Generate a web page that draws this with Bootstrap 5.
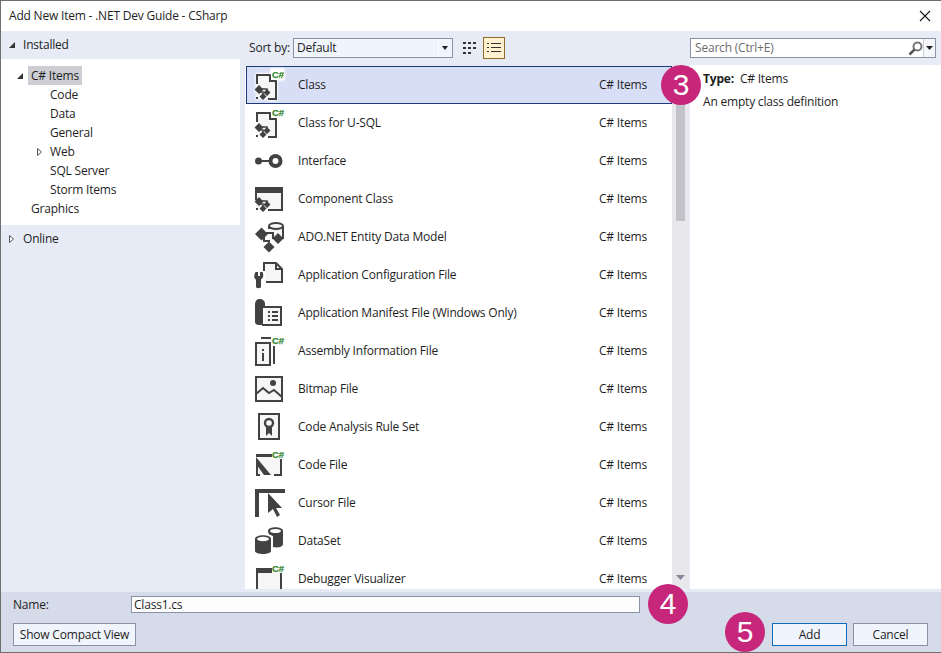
<!DOCTYPE html>
<html lang="en">
<head>
<meta charset="utf-8">
<title>Add New Item</title>
<link rel="stylesheet" href="https://cdn.jsdelivr.net/npm/bootstrap@5.3.0/dist/css/bootstrap.min.css">
<style>
html,body{height:100%;margin:0;overflow:hidden}
body{font-family:"Open Sans","Noto Sans",sans-serif;font-size:12px;line-height:16px;color:#1e1e1e;background:#fff}
.dlg{width:941px;height:653px;border:solid #6e6e6e;border-width:1px 0 1px 1px;position:relative;overflow:hidden;letter-spacing:-.2px}
.titlebar{height:30px;padding-left:8px;background:#fff}
.closer{width:14px;height:14px;margin-right:9px}
.mainzone{height:561px;background:#e6ebf5}
.leftcol{width:239px;flex:none}
.treehead{height:28px;padding-left:7px}
.treebody{height:166px;background:#fff;padding-top:7px}
.treeline{height:19px;display:flex;align-items:center}
.tw{width:7px;height:8px;flex:none}
.lvl1{padding-left:15px}.lvl1 .tag{margin-left:5px;padding:0 3px;height:19px;line-height:19px}
.lvl1.on .tag{background:#ccced3}
.lvl2{padding-left:49px}.lvl2.kids{padding-left:35px}.lvl2.kids .tw{margin-right:7px}
.lvl1.noarrow{padding-left:30px}
.online{padding-left:7px;height:28px}
.tool{margin-left:1px;padding-left:5px;min-width:0}
.toolbar{height:34px;flex:none;padding-left:4px;margin-left:-1px}
.sortlabel{width:44px;flex:none}
.sortpick{width:160px;height:20px;border:1px solid #8a93a6;border-radius:0;background:#f0f4fc url("data:image/svg+xml,%3Csvg xmlns='http://www.w3.org/2000/svg' width='14' height='18'%3E%3Cpath d='M.5 0v18' stroke='%23fff'/%3E%3Cpath d='M4 7h6l-3 4z' fill='%23222'/%3E%3C/svg%3E") no-repeat right 0 top 0;padding:0 0 0 3px;font-size:12px;line-height:16px;color:#1e1e1e;letter-spacing:-.2px;font-family:inherit;appearance:none}
.viewgrid{width:22px;height:22px;margin-left:6px}
.viewlist{width:22px;height:22px;margin-left:2px;background:#fff0d0;border:1px solid #8d6c2c}
.searchbox{width:246px;height:20px;margin-left:auto;margin-right:5px;background:#fff;border:1px solid #8a93a6}
.searchbox .hint{color:#6d6d6d;padding-left:4px}
.searchsplit{width:12px;height:100%;border-left:1px solid #c8cdd8;background:#f5f6fa}
.bodyzone{height:527px;margin-left:-1px}
.itemlist{width:427px;flex:none;background:#fff;overflow:hidden;height:523px;margin-top:1px}
.list-group-item.itemrow{height:38px;flex:none;border:0;border-radius:0;padding:0 26px 0 7px;background:transparent;color:#1e1e1e;margin-left:1px}
.list-group-item.itemrow.picked{border:1px solid #1c3a78;background:#d8def6;padding:0 25px 0 6px;color:#1e1e1e;margin-top:0}
.itemrow svg{width:32px;height:32px;flex:none}
.picked svg{filter:drop-shadow(0 0 1px #fff) drop-shadow(0 0 1px #fff)}
.itemname{margin-left:13px}
.itemkind{margin-left:auto;width:47px;white-space:nowrap}
.scrolltrack{width:17px;flex:none;background:#e8e8ec;height:524px;padding:0 4px}
.scrollthumb{height:138px;margin-top:18px;background:#c2c3c9;width:9px}
.infopane{flex:1;background:#fff;margin-left:1px;height:524px;padding:6px 13px}
.infopane p{margin:0 0 7px}
.kindword{margin-left:6px}
.footzone{height:60px;background:#d6dbe9;padding:0 13px 0 12px}
.namerow{height:21px;padding-top:4px}
.namelabel{width:118px}
.namefield.form-control{width:509px;height:17px;min-height:0;border:1px solid #8a93a6;border-radius:0;padding:0 2px;font-size:12px;line-height:15px;color:#1e1e1e;background:#fdfdfe;letter-spacing:-.2px}
.footbtns{margin-top:10px}
.footbtns .btn{height:23px;padding:0;font-size:12px;line-height:19px;border-radius:0;border:1px solid #8a93a6;background:#f0f4fc;color:#1e1e1e;letter-spacing:-.2px}
.btncompact{width:123px}
.btnact{width:75px}
.footbtns .btn.btnmain{border-color:#0f6cbd;margin-left:auto}
.footbtns .btn.btncancel{margin-left:6px}
.callout{position:absolute;width:40px;height:40px;border-radius:50%;background:#c7277a;color:#fff;font-family:"Liberation Sans",sans-serif;font-size:30px;line-height:40px;text-align:center;letter-spacing:0}
.c3{left:660px;top:64px}.c4{left:647px;top:583px}.c5{left:724px;top:611px}
.csharp{font:bold 9.5px "Liberation Sans",sans-serif;fill:#388a34;stroke:#388a34;stroke-width:.25px;letter-spacing:0}
.g{fill:#424242}.s{fill:none;stroke:#424242}.w{fill:#f6f6f6}
.halo{fill:#fff}
</style>
</head>
<body>
<svg width="0" height="0" class="d-block position-absolute">
<defs>
<g id="glyph"><path class="s" stroke-width="1.500" d="M6 17h8v6M6 17v3h4v5"/><path class="g" d="M6 13l4.500 4.500L6 22l-4.500-4.500zM14 17l3.500 3.500L14 24l-3.500-3.500zM10 21l3.500 3.500L10 28l-3.500-3.500z"/></g>
<symbol id="i-class" viewBox="0 0 32 32"><path class="w" d="M4 6h13l6 6v17H4z"/><path class="s" stroke-width="2" d="M4 15V6h13l6 6v18h-8M17 6v6h6M3 29h2M9 29h2"/><use href="#glyph" y="3"/><rect class="halo" x="18" y="0" width="13" height="11"/><text x="19" y="9" class="csharp">C#</text></symbol>
<symbol id="i-iface" viewBox="0 0 32 32"><circle class="g" cx="5.500" cy="16" r="3.500"/><path class="s" stroke-width="2" d="M8 16h8"/><circle class="s" stroke-width="4" cx="22.500" cy="16" r="5"/></symbol>
<symbol id="i-comp" viewBox="0 0 32 32"><path class="w" d="M3 9h26v17H3z"/><path class="g" d="M2 4h28v6H2z"/><path class="s" stroke-width="2" d="M3 10v7M29 10v17H15M3 26h2M9 26h2"/><use href="#glyph" y="1"/></symbol>
<symbol id="i-ado" viewBox="0 0 32 32"><path class="w" d="M16 5h15v14H16z"/><ellipse class="s" stroke-width="2" cx="23" cy="5" rx="7" ry="3"/><path class="s" stroke-width="2" d="M30 5v13M16 5v3"/><path class="s" stroke-width="2" d="M11 12h9v6M11 12v8h6"/><path class="g" d="M8.500 6.500l6.500 6.500-6.500 6.500L2 13zM25 12l5.500 5.500L25 23l-5.500-5.500zM16 20.500l5.500 5.500-5.500 5.500-5.500-5.500z"/></symbol>
<symbol id="i-config" viewBox="0 0 32 32"><path class="w" d="M10 3h13l7 7v14H14z"/><path class="s" stroke-width="2" d="M11 12V4h12l6 6v13H13M23 4v6h6"/><path class="g" d="M2.500 13h2.500v4h2v-4h2.500c1 2 1.500 6-1.500 7.500V28c0 1.500-5 1.500-5 0v-7.500c-3-1.500-1.500-5.500-.5-7.500z"/></symbol>
<symbol id="i-manifest" viewBox="0 0 32 32"><path class="g" d="M6 2c4 0 6 2 6 5v4h-2v17h-4c-3 0-4-2-4-3V7c0-3 2-5 4-5z"/><path class="w" d="M12 9h16v20H12z"/><path class="s" stroke-width="2" d="M12 10h16v18H9"/><path class="s" stroke-width="2" d="M15 15h2M19 15h6M15 19h2M19 19h6M15 23h2M19 23h6"/></symbol>
<symbol id="i-assembly" viewBox="0 0 32 32"><path class="w" d="M3 8h13v21H3z"/><path class="s" stroke-width="2" d="M3 8h14v22H3zM8 3h10M21 11v18"/><path class="g" d="M9 14h2v2H9zM9 18h2v8H9z"/><text x="19" y="8.500" class="csharp">C#</text></symbol>
<symbol id="i-bitmap" viewBox="0 0 32 32"><path class="w" d="M3 4h26v24H3z"/><path class="s" stroke-width="2" d="M3 4h26v24H3zM3 21l7-6 6 5 5-3 8 7"/><circle class="g" cx="20" cy="10" r="3"/></symbol>
<symbol id="i-rule" viewBox="0 0 32 32"><path class="w" d="M6 3h20v25H6z"/><path class="s" stroke-width="2" d="M6 3h20v25H6z"/><circle class="s" stroke-width="2.400" cx="16" cy="12" r="4"/><path class="g" d="M13 16v9l3-3 3 3v-9z"/></symbol>
<symbol id="i-code" viewBox="0 0 32 32"><path class="w" d="M4 6h24v20H4z"/><path class="g" d="M3 5h19v3H3zM3 8l15 18h-7L3 15z"/><path class="s" stroke-width="2" d="M4 15v11h3M21 26h7V10"/><rect class="halo" x="19" y="1" width="12" height="9"/><text x="19" y="8.500" class="csharp">C#</text></symbol>
<symbol id="i-cursor" viewBox="0 0 32 32"><path class="g" d="M2 2h30v4H6v24H2z"/><path class="g" d="M15 6l14 15h-6l4 7-3 2-4-8-5 4z"/></symbol>
<symbol id="i-data" viewBox="0 0 32 32"><path class="g" d="M15 6c0-5 15-5 15 0v13c0 3-5 4-10 3V11c-2-1-5-1-5-5z"/><ellipse fill="#fff" cx="22.500" cy="6" rx="5.500" ry="2"/><path class="g" d="M2 14c0-5 16-5 16 0v12c0 4-16 4-16 0z"/><ellipse fill="#fff" cx="10" cy="14" rx="6" ry="2.200"/></symbol>
<symbol id="i-debug" viewBox="0 0 32 32"><path class="w" d="M4 7h24v25H4z"/><path class="g" d="M3 5h21v5H3z"/><path class="s" stroke-width="2" d="M4 10v22M28 10v22"/><rect class="halo" x="19" y="1" width="12" height="9"/><text x="19" y="8.500" class="csharp">C#</text></symbol>
</defs>
</svg>
<div class="dlg">
  <div class="titlebar d-flex align-items-center justify-content-between">
    <span>Add New Item - .NET Dev Guide - CSharp</span>
    <svg class="closer" viewBox="0 0 14 14"><path d="M2 2l10 10M12 2L2 12" stroke="#1a1a1a" stroke-width="1.100" fill="none"/></svg>
  </div>
  <div class="mainzone d-flex">
    <div class="leftcol">
      <div class="treehead d-flex align-items-center gap-2"><svg class="tw" viewBox="0 0 7 8"><path d="M7 1v6H1z" fill="#333"/></svg><span>Installed</span></div>
      <div class="treebody">
        <div class="treeline lvl1 on"><svg class="tw" viewBox="0 0 7 8"><path d="M7 1v6H1z" fill="#333"/></svg><span class="tag">C# Items</span></div>
        <div class="treeline lvl2">Code</div>
        <div class="treeline lvl2">Data</div>
        <div class="treeline lvl2">General</div>
        <div class="treeline lvl2 kids"><svg class="tw" viewBox="0 0 7 8"><path d="M1.500.5l4 3.500-4 3.500z" fill="#fff" stroke="#555"/></svg>Web</div>
        <div class="treeline lvl2">SQL Server</div>
        <div class="treeline lvl2">Storm Items</div>
        <div class="treeline lvl1 noarrow">Graphics</div>
      </div>
      <div class="online d-flex align-items-center gap-2"><svg class="tw" viewBox="0 0 7 8"><path d="M1.500.5l4 3.500-4 3.500z" fill="#fff" stroke="#555"/></svg><span>Online</span></div>
    </div>
    <div class="flex-grow-1 d-flex flex-column tool">
      <div class="toolbar d-flex align-items-center">
        <span class="sortlabel">Sort by:</span>
        <select class="sortpick" aria-label="Sort by"><option>Default</option></select>
        <svg class="viewgrid" viewBox="0 0 22 22"><path d="M4 5h3v2H4zM9 5h3v2H9zM14 5h3v2h-3zM4 10h3v2H4zM9 10h3v2H9zM14 10h3v2h-3zM4 15h3v2H4zM9 15h3v2H9z" fill="#333"/></svg>
        <div class="viewlist d-flex align-items-center justify-content-center"><svg width="14" height="12" viewBox="0 0 14 12"><path d="M0 1h2v1H0zM4 1h10v1H4zM0 5h2v1H0zM4 5h10v1H4zM0 9h2v1H0zM4 9h10v1H4z" fill="#333"/></svg></div>
        <div class="searchbox d-flex align-items-center">
          <span class="hint flex-grow-1">Search (Ctrl+E)</span>
          <svg width="15" height="15" viewBox="0 0 15 15"><circle cx="9.500" cy="5.500" r="4" fill="none" stroke="#777" stroke-width="2"/><path d="M6.500 8.500L1.500 13.500" stroke="#555" stroke-width="2.500"/></svg>
          <div class="searchsplit d-flex align-items-center justify-content-center"><svg width="7" height="4" viewBox="0 0 7 4"><path d="M0 0h7L3.500 4z" fill="#222"/></svg></div>
        </div>
      </div>
      <div class="bodyzone d-flex">
        <div class="itemlist list-group list-group-flush">
          <div class="list-group-item itemrow picked d-flex align-items-center"><svg><use href="#i-class"/></svg><span class="itemname">Class</span><span class="itemkind">C# Items</span></div>
          <div class="list-group-item itemrow d-flex align-items-center"><svg><use href="#i-class"/></svg><span class="itemname">Class for U-SQL</span><span class="itemkind">C# Items</span></div>
          <div class="list-group-item itemrow d-flex align-items-center"><svg><use href="#i-iface"/></svg><span class="itemname">Interface</span><span class="itemkind">C# Items</span></div>
          <div class="list-group-item itemrow d-flex align-items-center"><svg><use href="#i-comp"/></svg><span class="itemname">Component Class</span><span class="itemkind">C# Items</span></div>
          <div class="list-group-item itemrow d-flex align-items-center"><svg><use href="#i-ado"/></svg><span class="itemname">ADO.NET Entity Data Model</span><span class="itemkind">C# Items</span></div>
          <div class="list-group-item itemrow d-flex align-items-center"><svg><use href="#i-config"/></svg><span class="itemname">Application Configuration File</span><span class="itemkind">C# Items</span></div>
          <div class="list-group-item itemrow d-flex align-items-center"><svg><use href="#i-manifest"/></svg><span class="itemname">Application Manifest File (Windows Only)</span><span class="itemkind">C# Items</span></div>
          <div class="list-group-item itemrow d-flex align-items-center"><svg><use href="#i-assembly"/></svg><span class="itemname">Assembly Information File</span><span class="itemkind">C# Items</span></div>
          <div class="list-group-item itemrow d-flex align-items-center"><svg><use href="#i-bitmap"/></svg><span class="itemname">Bitmap File</span><span class="itemkind">C# Items</span></div>
          <div class="list-group-item itemrow d-flex align-items-center"><svg><use href="#i-rule"/></svg><span class="itemname">Code Analysis Rule Set</span><span class="itemkind">C# Items</span></div>
          <div class="list-group-item itemrow d-flex align-items-center"><svg><use href="#i-code"/></svg><span class="itemname">Code File</span><span class="itemkind">C# Items</span></div>
          <div class="list-group-item itemrow d-flex align-items-center"><svg><use href="#i-cursor"/></svg><span class="itemname">Cursor File</span><span class="itemkind">C# Items</span></div>
          <div class="list-group-item itemrow d-flex align-items-center"><svg><use href="#i-data"/></svg><span class="itemname">DataSet</span><span class="itemkind">C# Items</span></div>
          <div class="list-group-item itemrow d-flex align-items-center"><svg><use href="#i-debug"/></svg><span class="itemname">Debugger Visualizer</span><span class="itemkind">C# Items</span></div>
        </div>
        <div class="scrolltrack d-flex flex-column">
          <div class="scrollthumb"></div>
          <svg class="mt-auto mb-2" width="9" height="6" viewBox="0 0 9 6"><path d="M0 0h9L4.500 5z" fill="#868999"/></svg>
        </div>
        <div class="infopane">
          <p><strong>Type:</strong><span class="kindword">C# Items</span></p>
          <p>An empty class definition</p>
        </div>
      </div>
    </div>
  </div>
  <div class="footzone">
    <div class="namerow d-flex align-items-center">
      <span class="namelabel">Name:</span>
      <input class="form-control namefield" type="text" value="Class1.cs" aria-label="Name">
    </div>
    <div class="footbtns d-flex">
      <button type="button" class="btn btncompact">Show Compact View</button>
      <button type="button" class="btn btnact btnmain">Add</button>
      <button type="button" class="btn btnact btncancel">Cancel</button>
    </div>
  </div>
  <div class="callout c3">3</div>
  <div class="callout c4">4</div>
  <div class="callout c5">5</div>
</div>
<script src="https://cdn.jsdelivr.net/npm/bootstrap@5.3.0/dist/js/bootstrap.bundle.min.js"></script>
</body>
</html>
